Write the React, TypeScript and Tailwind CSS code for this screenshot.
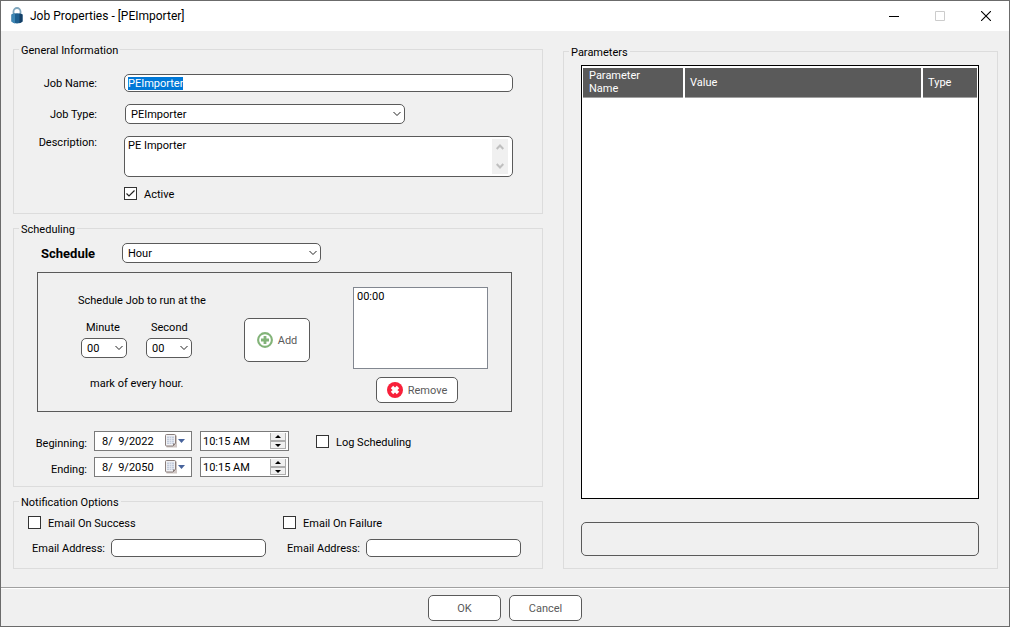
import { useEffect, useRef } from "react";
import type { ReactNode } from "react";

function Group({ title, className = "", children }: { title: string; className?: string; children: ReactNode }) {
  return (
    <fieldset className={`min-w-0 border border-[#dcdcdc] ${className}`}>
      <legend className="ml-[5px] h-[14px] px-[2px] leading-[17px]">{title}</legend>
      {children}
    </fieldset>
  );
}

function Chevron() {
  return (
    <svg className="pointer-events-none col-start-1 row-start-1 mr-1 self-center justify-self-end" width="8" height="6" viewBox="0 0 8 6" fill="none" stroke="#222">
      <path d="M0.5 1L4 4.5L7.5 1" />
    </svg>
  );
}

function Select({ id, options, className = "" }: { id: string; options: string[]; className?: string }) {
  return (
    <div className={`grid ${className}`}>
      <select id={id} className="col-start-1 row-start-1 h-5 w-full appearance-none rounded-[5px] border border-[#5a5a5a] bg-white pt-px pr-4 pl-[5px] leading-[17px] outline-none">
        {options.map((o) => (
          <option key={o}>{o}</option>
        ))}
      </select>
      <Chevron />
    </div>
  );
}

function CheckBox({ label, checked = false }: { label: string; checked?: boolean }) {
  return (
    <label className="flex h-[13px] items-center gap-[7px] leading-[15px] whitespace-nowrap">
      <span className="grid size-[13px]">
        <input type="checkbox" defaultChecked={checked} className="peer col-start-1 row-start-1 size-[13px] appearance-none border border-[#333] bg-white" />
        <svg className="pointer-events-none invisible col-start-1 row-start-1 peer-checked:visible" width="13" height="13" viewBox="0 0 13 13" fill="none" stroke="#222" strokeWidth="1.2">
          <path d="M2.5 6.5L5 9L10.5 3.5" />
        </svg>
      </span>
      <span className="pt-px">{label}</span>
    </label>
  );
}

function CalendarIcon() {
  return (
    <svg width="21" height="14" viewBox="0 0 21 14">
      <path d="M1.5 1.5h10.500v12h-10.500z" fill="#cfc6c3" />
      <path d="M0.5 1.5q0-1 1-1h8q1 0 1 1v8l-2.5 2.5h-6.500q-1 0-1-1z" fill="#f1f2f5" stroke="#8b7f7c" />
      <path d="M2 2.500h7v7.500h-7z" fill="#c3cbdb" />
      <path d="M4.500 2.500v7.500M6.500 2.500v7.500M2 4.500h7M2 6.500h7M2 8.500h7" stroke="#e8ecf4" strokeWidth="0.7" fill="none" />
      <path d="M8 12v-2.500h2.500z" fill="#8b7f7c" />
      <path d="M13 5h7l-3.5 4z" fill="#47639c" />
    </svg>
  );
}

function Spinner() {
  return (
    <span className="flex w-4 flex-col">
      <button type="button" aria-label="Increase" className="flex h-2 items-center justify-center border-x border-b border-[#adadad] bg-[#f0f0f0]">
        <svg width="6" height="3" viewBox="0 0 6 3"><path d="M0 3L3 0L6 3z" fill="#000" /></svg>
      </button>
      <button type="button" aria-label="Decrease" className="flex h-2 items-center justify-center border border-[#adadad] bg-[#f0f0f0]">
        <svg width="6" height="3" viewBox="0 0 6 3"><path d="M0 0h6L3 3z" fill="#000" /></svg>
      </button>
    </span>
  );
}

function DateTimeRow({ id, label, date }: { id: string; label: string; date: string }) {
  return (
    <div className="flex h-5 items-center">
      <label htmlFor={id} className="mr-[7px] w-[73px] pt-1 text-right">{label}</label>
      <div className="mr-2 flex h-5 w-[98px] items-center border border-[#7a7a7a] bg-white">
        <input id={id} defaultValue={date} className="w-[70px] bg-transparent pl-[7px] outline-none" />
        <button type="button" aria-label={`${label} calendar`}><CalendarIcon /></button>
      </div>
      <div className="flex h-5 w-[89px] items-center justify-between border border-[#7a7a7a] bg-white px-[2px]">
        <input aria-label={`${label} time`} defaultValue="10:15 AM" className="w-[64px] bg-transparent outline-none" />
        <Spinner />
      </div>
    </div>
  );
}

function EmailOption({ id, label }: { id: string; label: string }) {
  return (
    <div className="flex flex-col gap-[10px]">
      <CheckBox label={label} />
      <div className="flex items-center">
        <label htmlFor={id} className="w-[83px] pl-1 whitespace-nowrap">Email Address:</label>
        <input id={id} className="h-[18px] w-[155px] rounded-[5px] border border-[#5a5a5a] bg-white px-1 outline-none" />
      </div>
    </div>
  );
}

const BUTTON = "flex items-center justify-center rounded-[5px] border border-[#5a5a5a] bg-white text-[#5a5a5a]";

export default function App() {
  const nameRef = useRef<HTMLInputElement>(null);
  useEffect(() => {
    nameRef.current?.focus();
    nameRef.current?.select();
  }, []);

  return (
    <div className="flex min-h-screen flex-col border border-[#6b6b6b] bg-[#f0f0f0] font-[Roboto,sans-serif] text-[11px] leading-[13px] text-black">
      <header className="flex h-[30px] shrink-0 items-center bg-white pl-[10px]">
        <svg width="12" height="18" viewBox="0 0 12 18">
          <path d="M2.5 9V4.5a3.5 3.5 0 0 1 7 0V9" fill="none" stroke="#7fa6bd" strokeWidth="1.8" />
          <path d="M0.5 7.5Q6 5 11.5 7.5V14.5Q6 18.5 0.5 14.5z" fill="#1f5f8f" />
          <path d="M0.5 7.5Q3 6.4 4 6.4V16.4Q2 16 0.5 14.5z" fill="#3d86b4" />
          <path d="M8.5 6.6Q10.5 7 11.5 7.5V14.5Q10.5 15.6 8.5 16.2z" fill="#143f66" />
        </svg>
        <h1 className="ml-[7px] flex-1 text-[12px] leading-4">Job Properties - [PEImporter]</h1>
        <button type="button" aria-label="Minimize" className="flex h-full w-[46px] items-center justify-center">
          <svg width="10" height="10" viewBox="0 0 10 10"><path d="M0 5.5h10" stroke="#000" /></svg>
        </button>
        <button type="button" aria-label="Maximize" disabled className="flex h-full w-[46px] items-center justify-center">
          <svg width="10" height="10" viewBox="0 0 10 10"><path d="M0.5 0.5h9v9h-9z" stroke="#ccc" fill="none" /></svg>
        </button>
        <button type="button" aria-label="Close" className="flex h-full w-[46px] items-center justify-center">
          <svg width="10" height="10" viewBox="0 0 10 10"><path d="M0 0l10 10M10 0l-10 10" stroke="#000" strokeWidth="1.1" /></svg>
        </button>
      </header>

      <main className="flex flex-1 gap-5 pt-[11px] pr-[11px] pb-[18px] pl-3">
        <div className="flex w-[530px] shrink-0 flex-col gap-[7px]">
          <Group title="General Information" className="pb-[13px]">
            <div className="grid grid-cols-[83px_1fr] gap-x-[27px] gap-y-3 pt-[18px] pr-[29px]">
              <label htmlFor="job-name" className="self-center text-right">Job Name:</label>
              <input id="job-name" ref={nameRef} defaultValue="PEImporter" className="h-[18px] rounded-[5px] border border-[#5a5a5a] bg-white px-[3px] outline-none selection:bg-[#0078d7] selection:text-white" />
              <label htmlFor="job-type" className="self-center text-right">Job Type:</label>
              <Select id="job-type" options={["PEImporter"]} className="ml-px w-[280px]" />
              <label htmlFor="description" className="text-right">Description:</label>
              <div className="flex h-[41px] rounded-[5px] border border-[#5a5a5a] bg-white py-[2px] pr-1">
                <textarea id="description" defaultValue="PE Importer" className="flex-1 resize-none overflow-hidden bg-transparent px-[3px] outline-none" />
                <div className="flex w-4 flex-col items-center justify-between bg-[#f0f0f0] py-[5px]">
                  <svg width="8" height="6" viewBox="0 0 8 6" fill="none" stroke="#bfbfbf" strokeWidth="2"><path d="M0.7 5L4 1.5L7.3 5" /></svg>
                  <svg width="8" height="6" viewBox="0 0 8 6" fill="none" stroke="#bfbfbf" strokeWidth="2"><path d="M0.7 1L4 4.5L7.3 1" /></svg>
                </div>
              </div>
            </div>
            <div className="pt-[10px] pl-[110px]">
              <CheckBox label="Active" checked />
            </div>
          </Group>

          <Group title="Scheduling" className="pr-[30px] pb-[9px]">
            <div className="flex items-center pt-2 pl-[27px]">
              <label htmlFor="schedule" className="w-[81px] text-[13px] font-bold">Schedule</label>
              <Select id="schedule" options={["Hour"]} className="w-[199px]" />
            </div>
            <div className="mt-[9px] ml-[23px] flex h-[140px] items-start border border-[#5a5a5a]">
              <div className="w-[206px] pt-[21px] pl-10">
                <p>Schedule Job to run at the</p>
                <div className="mt-[14px] ml-[3px] flex gap-[19px]">
                  <div className="flex w-[46px] flex-col gap-1">
                    <label htmlFor="minute" className="pl-[5px]">Minute</label>
                    <Select id="minute" options={["00"]} />
                  </div>
                  <div className="flex w-[46px] flex-col gap-1">
                    <label htmlFor="second" className="pl-[5px]">Second</label>
                    <Select id="second" options={["00"]} />
                  </div>
                </div>
                <p className="mt-[19px] ml-3">mark of every hour.</p>
              </div>
              <button type="button" className={`mt-[45px] h-11 w-[66px] gap-[5px] ${BUTTON}`}>
                <svg width="16" height="16" viewBox="0 0 16 16" fill="none" stroke="#82b378">
                  <circle cx="8" cy="8" r="6.9" strokeWidth="2.1" />
                  <path d="M8 4v8M4 8h8" strokeWidth="2.8" />
                </svg>
                Add
              </button>
              <div className="ml-[43px] flex w-[135px] flex-col items-center gap-2 pt-[14px]">
                <select size={5} aria-label="Scheduled times" className="h-[82px] w-full appearance-none overflow-hidden border border-[#828790] bg-white outline-none">
                  <option className="px-[3px] py-[2px]">00:00</option>
                </select>
                <button type="button" className={`-ml-[7px] h-[26px] w-[82px] gap-[5px] ${BUTTON}`}>
                  <svg width="16" height="16" viewBox="0 0 16 16">
                    <circle cx="8" cy="8" r="8" fill="#f8203a" />
                    <path d="M5 5l6 6M11 5l-6 6" stroke="#fff" strokeWidth="3.4" />
                  </svg>
                  Remove
                </button>
              </div>
            </div>
            <div className="flex pt-[19px]">
              <div className="flex flex-col gap-[6px]">
                <DateTimeRow id="beginning" label="Beginning:" date="8/  9/2022" />
                <DateTimeRow id="ending" label="Ending:" date="8/  9/2050" />
              </div>
              <div className="pt-1 pl-[27px]">
                <CheckBox label="Log Scheduling" />
              </div>
            </div>
          </Group>

          <Group title="Notification Options" className="pb-[11px]">
            <div className="grid grid-cols-[255px_1fr] pt-2 pl-[14px]">
              <EmailOption id="email-success" label="Email On Success" />
              <EmailOption id="email-failure" label="Email On Failure" />
            </div>
          </Group>
        </div>

        <div className="flex min-w-0 flex-1 flex-col pt-[2px]">
          <Group title="Parameters" className="flex flex-1 flex-col">
            <div className="flex flex-1 flex-col pt-[7px] pr-[18px] pb-3 pl-[17px]">
              <div className="flex-1 border border-black bg-white px-px pt-[2px]">
                <table className="w-full table-fixed border-collapse bg-[#5a5a5a] text-left text-white">
                  <thead>
                    <tr className="h-[29px] border-b border-[#a0a0a0]">
                      <th className="w-[101px] border-r-2 border-white pr-8 pl-[6px] font-normal">Parameter Name</th>
                      <th className="border-r-2 border-white pl-[5px] font-normal">Value</th>
                      <th className="w-[55px] pl-[5px] font-normal">Type</th>
                    </tr>
                  </thead>
                </table>
              </div>
              <div className="mt-[23px] h-[34px] rounded-[5px] border border-[#5a5a5a]" />
            </div>
          </Group>
        </div>
      </main>

      <footer className="flex shrink-0 justify-center gap-2 border-t border-[#a0a0a0] pt-[7px] pb-[5px] shadow-[inset_0_1px_0_#fff]">
        <button type="button" className={`h-[26px] w-[73px] ${BUTTON}`}>OK</button>
        <button type="button" className={`h-[26px] w-[73px] ${BUTTON}`}>Cancel</button>
      </footer>
    </div>
  );
}
